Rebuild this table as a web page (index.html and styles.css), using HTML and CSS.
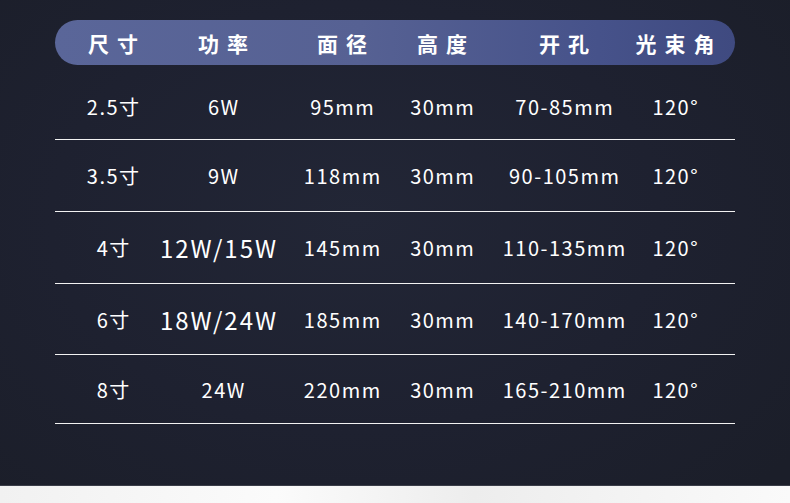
FILE: index.html
```html
<!DOCTYPE html>
<html lang="zh">
<head>
<meta charset="utf-8">
<link rel="stylesheet" href="styles.css">
</head>
<body>
<div class="page">
  <div class="table">
    <div class="head">
      <div class="cell"><span>尺寸</span></div>
      <div class="cell"><span>功率</span></div>
      <div class="cell"><span>面径</span></div>
      <div class="cell"><span>高度</span></div>
      <div class="cell"><span>开孔</span></div>
      <div class="cell"><span>光束角</span></div>
    </div>
    <div class="row r1">
      <div class="cell">2.5寸</div>
      <div class="cell">6W</div>
      <div class="cell">95mm</div>
      <div class="cell">30mm</div>
      <div class="cell">70-85mm</div>
      <div class="cell">120°</div>
    </div>
    <div class="row r2">
      <div class="cell">3.5寸</div>
      <div class="cell">9W</div>
      <div class="cell">118mm</div>
      <div class="cell">30mm</div>
      <div class="cell">90-105mm</div>
      <div class="cell">120°</div>
    </div>
    <div class="row r3">
      <div class="cell">4寸</div>
      <div class="cell big">12W/15W</div>
      <div class="cell">145mm</div>
      <div class="cell">30mm</div>
      <div class="cell">110-135mm</div>
      <div class="cell">120°</div>
    </div>
    <div class="row r4">
      <div class="cell">6寸</div>
      <div class="cell big">18W/24W</div>
      <div class="cell">185mm</div>
      <div class="cell">30mm</div>
      <div class="cell">140-170mm</div>
      <div class="cell">120°</div>
    </div>
    <div class="row r5">
      <div class="cell">8寸</div>
      <div class="cell">24W</div>
      <div class="cell">220mm</div>
      <div class="cell">30mm</div>
      <div class="cell">165-210mm</div>
      <div class="cell">120°</div>
    </div>
  </div>
</div>
<div class="strip"></div>
</body>
</html>
```

FILE: styles.css
```css
* { box-sizing: border-box; }
html, body { margin: 0; padding: 0; }
body {
  width: 790px;
  height: 503px;
  overflow: hidden;
  font-family: "Noto Sans CJK SC", "Noto Sans", sans-serif;
  color: #fff;
  background: #1d202b;
}
.page {
  height: 486px;
  padding: 20px 55px 0 55px;
  background: radial-gradient(ellipse 70% 80% at 45% 45%, #222636 0%, #1e2130 55%, #1b1e29 100%);
  border-bottom: 1px solid #3a3d48;
}
.table {
  width: 680px;
}
.head, .row {
  display: grid;
  grid-template-columns: 116px 104px 134px 66px 178px 44px 1fr;
  align-items: center;
}
.head {
  height: 45px;
  border-radius: 23px;
  background: linear-gradient(90deg, #5a6699 0%, #566193 45%, #46528a 80%, #3f4a80 100%);
  font-weight: 700;
  font-size: 21px;
  letter-spacing: 8px;
}
.head span { margin-right: -8px; }
.cell {
  display: flex;
  justify-content: center;
  white-space: nowrap;
}
.row {
  border-bottom: 1px solid #f2f2f2;
  font-size: 20px;
  letter-spacing: 1.5px;
}
.row .cell { margin-right: -1.5px; }
.r1 { height: 75px; padding-top: 8px; }
.r2 { height: 72px; }
.r3 { height: 72px; }
.r4 { height: 71px; }
.r5 { height: 69px; }
.row .big { font-size: 24px; letter-spacing: 2px; margin-right: 8px; }
.strip {
  height: 17px;
  background: linear-gradient(90deg, #f1f1f1 0%, #fbfbfb 35%, #ededed 60%, #fafafa 100%);
}
```
